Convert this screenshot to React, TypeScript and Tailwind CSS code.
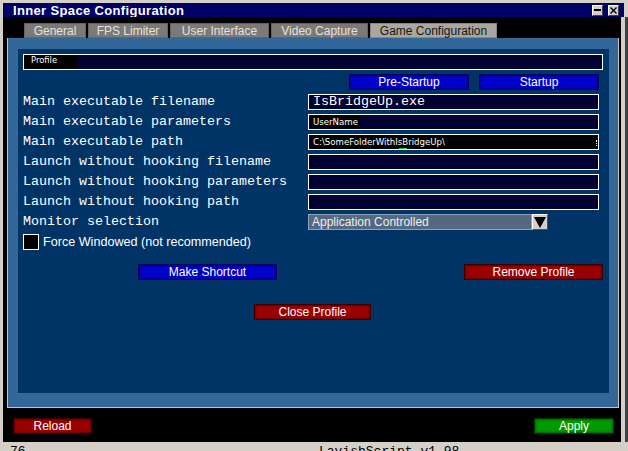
import React from 'react';

const mono = { fontFamily: '"Liberation Mono", "Courier New", monospace' };

const sans = 'font-["Liberation_Sans",Arial,sans-serif]';
const small = 'font-["DejaVu_Sans",Verdana,sans-serif]';
const monoCls = 'font-["Liberation_Mono","Courier_New",monospace]';

const tabs = [
  { label: 'General', w: 'w-[62px]' },
  { label: 'FPS Limiter', w: 'w-[80px]' },
  { label: 'User Interface', w: 'w-[99px]' },
  { label: 'Video Capture', w: 'w-[97px]' },
  { label: 'Game Configuration', w: 'w-[127px]', active: true },
];

const rows = [
  'Main executable filename',
  'Main executable parameters',
  'Main executable path',
  'Launch without hooking filename',
  'Launch without hooking parameters',
  'Launch without hooking path',
];

const btnBase = `h-[16px] flex items-center justify-center text-white text-[12px] leading-none border ${sans}`;
const blueBtn = `${btnBase} bg-[#0000cc] border-[#000055] shadow-[inset_0_0_2px_1px_#00008c]`;
const redBtn = `${btnBase} bg-[#990000] border-[#3a0000] shadow-[inset_0_0_2px_1px_#660000]`;
const greenBtn = `${btnBase} bg-[#009900] border-[#003a00] shadow-[inset_0_0_2px_1px_#006400]`;

function FieldValue({ index }: { index: number }) {
  if (index === 0) {
    return (
      <div className="w-[291px] h-[16px] border border-white bg-[#000033] flex items-center pl-[4px]">
        <span className={`${monoCls} text-[13.33px] leading-none text-white`}>IsBridgeUp.exe</span>
      </div>
    );
  }
  if (index === 1) {
    return (
      <div className="w-[291px] h-[16px] border border-white bg-[#000033] flex items-center pl-[2px]">
        <span className={`${small} text-[8.6px] leading-none text-white bg-black px-[2px] py-[2px]`}>UserName</span>
      </div>
    );
  }
  if (index === 2) {
    return (
      <div className="w-[291px] h-[16px] border border-white bg-[#000033] flex items-center pl-[2px] pr-[1px]">
        <div className="relative flex-1 h-[13px] bg-black flex items-center pl-[2px]">
          <span className={`${small} text-[8.6px] leading-none text-white`}>C:\SomeFolderWithIsBridgeUp\</span>
          <span className="absolute left-[88px] bottom-0 w-[8px] h-[1px] bg-[#22cc22]" />
          <span className="absolute right-0 top-[4px] w-[1px] h-[6px] border-l border-dotted border-white" />
        </div>
      </div>
    );
  }
  return <div className="w-[291px] h-[16px] border border-white bg-[#000033]" />;
}

export default function App() {
  return (
    <div className="w-[628px] h-[451px] bg-[#d4d0c8] overflow-hidden flex flex-col pt-[3px]">
      {/* title bar */}
      <div className="ml-[3px] w-[621px] h-[14px] bg-[#000066] flex items-center">
        <span className={`${sans} font-bold text-[13px] leading-none text-white pl-[10px] tracking-[0.35px]`}>
          Inner Space Configuration
        </span>
        <div className="ml-auto flex gap-[5px] pr-[5px]">
          <div className="w-[11px] h-[11px] bg-[#d4d0c8] border-t border-l border-white border-b border-r border-b-[#404040] border-r-[#404040] flex items-center justify-center">
            <div className="w-[7px] h-[2px] bg-black" />
          </div>
          <div className="w-[11px] h-[11px] bg-[#d4d0c8] border-t border-l border-white border-b border-r border-b-[#404040] border-r-[#404040] flex items-center justify-center">
            <svg width="7" height="7" viewBox="0 0 7 7">
              <path d="M0.5 0.5 L6.5 6.5 M6.5 0.5 L0.5 6.5" stroke="black" strokeWidth="1.4" />
            </svg>
          </div>
        </div>
      </div>

      <div className="flex">
        {/* window body */}
        <div className="w-[618px] h-[425px] ml-[3px] bg-black flex flex-col">
          {/* tabs */}
          <div className="flex gap-[2px] ml-[21px] mt-[6px] h-[15px]">
            {tabs.map((t) => (
              <div
                key={t.label}
                className={`${t.w} h-[15px] flex items-center justify-center text-[12px] leading-none ${sans} border ${
                  t.active
                    ? 'bg-[#aaa7a1] text-[#161616] border-[#8a8780]'
                    : 'bg-[#7c7a76] text-[#e2e2e2] border-[#65635f]'
                }`}
              >
                {t.label}
              </div>
            ))}
          </div>

          {/* panel */}
          <div className="ml-[4px] w-[612px] h-[370px] bg-[#336699] border-x border-b border-[#c9c5bd] pl-[10px] pr-[9px] pt-[11px]">
            <div className="w-[591px] h-[344px] bg-[#003366] flex flex-col">
              {/* profile bar */}
              <div className="ml-[5px] mt-[5px] w-[580px] h-[16px] border border-white bg-[#000033] flex">
                <div className="w-[53px] h-full bg-black pl-[7px] pt-[1px]">
                  <span className={`${small} text-[8.4px] leading-none text-white block`}>Profile</span>
                </div>
              </div>

              {/* pre / startup */}
              <div className="flex gap-[10px] ml-[331px] mt-[4px]">
                <div className={`${blueBtn} w-[120px]`}>Pre-Startup</div>
                <div className={`${blueBtn} w-[120px]`}>Startup</div>
              </div>

              {/* fields */}
              <div className="flex flex-col gap-[4px] mt-[4px] ml-[5px]">
                {rows.map((label, i) => (
                  <div key={label} className="flex items-center h-[16px]">
                    <span className={`w-[285px] text-[13.33px] leading-none text-white`} style={mono}>
                      {label}
                    </span>
                    <FieldValue index={i} />
                  </div>
                ))}
                <div className="flex items-center h-[16px]">
                  <span className="w-[285px] text-[13.33px] leading-none text-white" style={mono}>
                    Monitor selection
                  </span>
                  <div className="w-[224px] h-[16px] bg-[#546980] border border-[#8aa3bd] flex items-center pl-[3px]">
                    <span className={`${sans} text-[12px] leading-none text-[#eeeeee]`}>Application Controlled</span>
                  </div>
                  <div className="w-[16px] h-[16px] bg-[#d4d0c8] border border-t-white border-l-white border-b-[#505050] border-r-[#505050] flex items-center justify-center">
                    <svg width="12" height="11" viewBox="0 0 12 11">
                      <polygon points="0,0 12,0 6,11" fill="black" />
                    </svg>
                  </div>
                </div>
              </div>

              {/* checkbox */}
              <div className="flex items-center ml-[5px] mt-[4px] h-[16px] gap-[4px]">
                <div className="w-[16px] h-[16px] border border-white bg-black" />
                <span className={`${sans} text-[12.6px] leading-none text-white`}>Force Windowed (not recommended)</span>
              </div>

              {/* actions */}
              <div className="flex mt-[14px] ml-[120px]">
                <div className={`${blueBtn} w-[139px]`}>Make Shortcut</div>
                <div className={`${redBtn} w-[139px] ml-[187px]`}>Remove Profile</div>
              </div>
              <div className="flex mt-[24px] ml-[236px]">
                <div className={`${redBtn} w-[117px]`}>Close Profile</div>
              </div>
            </div>
          </div>

          {/* bottom buttons */}
          <div className="flex justify-between mt-[10px] ml-[10px] mr-[7px]">
            <div className={`${redBtn} w-[79px]`}>Reload</div>
            <div className={`${greenBtn} w-[80px]`}>Apply</div>
          </div>
        </div>
        <div className="w-[4px] h-[425px] bg-[#d4d0c8]" />
        <div className="w-[3px] h-[425px] bg-[#404040]" />
      </div>

      {/* status strip, cut off like the reference */}
      <div className="relative h-[9px] overflow-hidden">
        <span className="absolute left-[10px] top-[3px] text-[13px] leading-none text-black" style={mono}>
          76
        </span>
        <span className="absolute left-[319px] top-[3px] text-[13px] leading-none text-black" style={mono}>
          LavishScript v1.98
        </span>
      </div>
    </div>
  );
}
